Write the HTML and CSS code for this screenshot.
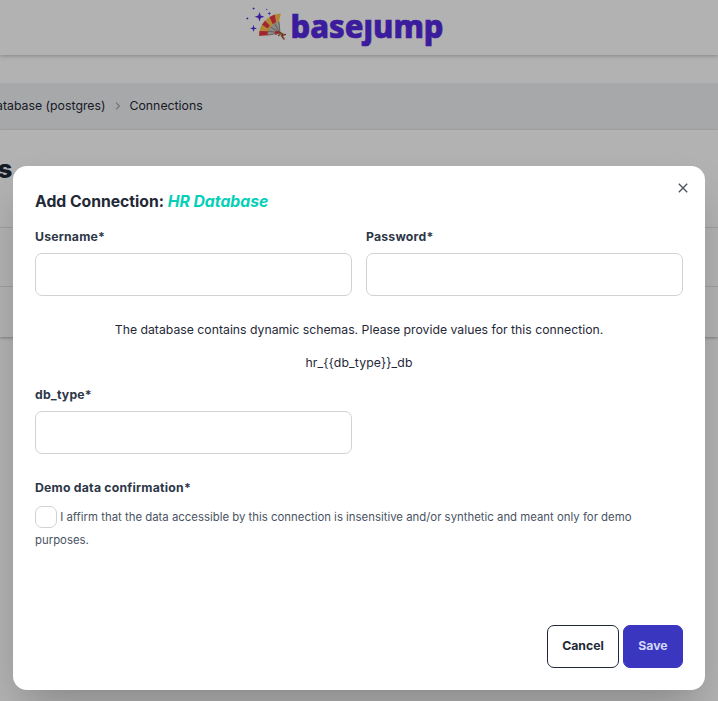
FILE: index.html
```html
<!DOCTYPE html>
<html lang="en">
<head>
<meta charset="utf-8">
<title>basejump</title>
<link rel="stylesheet" href="styles.css">
</head>
<body>
<header class="topbar">
  <svg class="logo" width="200" height="50" viewBox="0 0 200 50">
    <g fill="#5429e0">
      <path d="M16.500 12l1.200 3.500 3.600 1.200-3.600 1.200-1.200 3.500-1.200-3.500-3.600-1.200 3.600-1.200z"/>
      <path d="M10.500 24.700l.8 2.900 2.700.8-2.700.8-.8 2.900-.8-2.900-2.700-.8 2.700-.8z"/>
      <path d="M10.600 7l.4 1.100 1.100.4-1.100.4-.4 1.100-.4-1.100-1.100-.4 1.100-.4zM4.300 17l.4 1.100 1.100.4-1.100.4-.4 1.100-.4-1.100-1.100-.4 1.100-.4zM23.800 8.400l.3.8.8.3-.8.300-.3.800-.3-.8-.8-.3.800-.3zM26.300 11.600l.5 1.400 1.400.5-1.400.5-.5 1.400-.5-1.400-1.400-.5 1.400-.5z"/>
    </g>
    <path d="M37 33L23.500 35.200C24 28 29 22.500 36 21.200z" fill="#c9c4bd"/>
    <path d="M16 35.800C16 24 25 14.500 37.800 13.500L36 21.500C29.500 23.500 25.500 28 24.500 35.200z" fill="#ffc34d"/>
    <path d="M16 35.800l.6-4.800 8.400.3-.5 4zM19 24.800l3-4 4.800 4.800-2 3zM26.500 17l5.200-2.500 1.400 7.800-3.500 1.700z" fill="#e7374b"/>
    <path d="M36 21.500L37 33M31.500 23.500L37 33M27.500 27L37 33M25 31L37 33M24.500 35.200L37 33" fill="none" stroke="#6e6c70" stroke-width=".7"/>
    <path d="M31.500 32l2.500-1.500 1.500 3-3 1.500z" fill="#e7374b"/>
    <path d="M35 31.800l4.500 2-.8 2 2.300 3.200M38.500 35.500l3.800-1M37 34.500l-1.500 1" fill="none" stroke="#a5512d" stroke-width="1.500" stroke-linecap="round"/>
    <text class="wordmark" x="47.500" y="37.500" textLength="153" lengthAdjust="spacingAndGlyphs">baseȷump</text>
  </svg>
</header>
<nav class="crumbs">
  <span>Database (postgres)</span>
  <svg width="6" height="8" viewBox="0 0 6 8"><path d="M1 .8L4.500 4 1 7.200" fill="none" stroke="#a6abb2" stroke-width="1.200"/></svg>
  <span>Connections</span>
</nav>
<main class="content">
  <h1>Connections</h1>
  <div class="table"><div></div><div></div></div>
</main>
<div class="backdrop">
  <form class="modal">
    <button class="close" type="button" aria-label="Close"><svg width="10" height="10" viewBox="0 0 10 10"><path d="M.8 .8l8.400 8.400M9.200 .8L.8 9.200" fill="none" stroke="#4b5361" stroke-width="1.350"/></svg></button>
    <h2>Add Connection: <em>HR Database</em></h2>
    <div class="fields">
      <label>Username*<input type="text"></label>
      <label>Password*<input type="password"></label>
    </div>
    <p class="note">The database contains dynamic schemas. Please provide values for this connection.</p>
    <p class="schema">hr_{{db_type}}_db</p>
    <div class="fields">
      <label>db_type*<input type="text"></label>
    </div>
    <h3>Demo data confirmation*</h3>
    <div class="affirm"><input type="checkbox"> I affirm that the data accessible by this connection is insensitive and/or synthetic and meant only for demo purposes.</div>
    <div class="actions">
      <button class="btn" type="button">Cancel</button>
      <button class="btn primary" type="button">Save</button>
    </div>
  </form>
</div>
</body>
</html>
```
FILE: styles.css
```css
* { box-sizing: border-box; }
html { font-size: 14px; }
body {
  margin: 0;
  height: 701px;
  overflow: hidden;
  background: #fff;
  color: #1f2937;
  font-family: Inter, "Liberation Sans", sans-serif;
}
h1, h2, h3, p { margin: 0; }
.topbar {
  height: 55px;
  padding-left: 243px;
  box-shadow: 0 1px 4px rgba(0, 0, 0, .25);
}
.logo { display: block; overflow: visible; }
.wordmark {
  font: 800 32px "Noto Sans", "Open Sans", sans-serif;
  fill: #5429e0;
  stroke: #5429e0;
  stroke-width: .7px;
}
.crumbs {
  display: flex;
  align-items: center;
  gap: 9px;
  height: 47px;
  margin-top: 28px;
  padding-bottom: 2px;
  background: #eff1f4;
  font-size: 12.300px;
  white-space: nowrap;
}
.crumbs span:first-child {
  display: flex;
  justify-content: flex-end;
  width: 105.500px;
}
.content { height: 207px; padding-top: 22px; box-shadow: 0 1px 3px rgba(0, 0, 0, .3); }
.content h1 {
  width: 12.500px;
  height: 34px;
  display: flex;
  justify-content: flex-end;
  font-size: 26px;
  line-height: 34px;
  font-weight: 800;
}
.table { margin-top: 41px; }
.table div { height: 59px; border-top: 1px solid #e2e3e6; }
.backdrop {
  position: absolute;
  inset: 0;
  padding: 166px 13px 11px;
  background: rgba(0, 0, 0, .3);
}
.modal {
  position: relative;
  display: flex;
  flex-direction: column;
  height: 524px;
  padding: 22px;
  border-radius: 14px;
  background: #fff;
  box-shadow: 0 22px 44px -10px rgba(0, 0, 0, .25);
}
.close {
  position: absolute;
  top: 17px;
  right: 17px;
  display: flex;
  padding: 0;
  border: 0;
  background: none;
}
h2 { height: 27px; font-size: 15.750px; line-height: 27px; font-weight: 700; letter-spacing: -.02px; }
h2 em { color: #05d0b7; }
.fields { display: grid; grid-template-columns: 1fr 1fr; gap: 14px; margin-top: 12px; }
.fields label { font-size: 12.250px; line-height: 20px; font-weight: 700; letter-spacing: .2px; color: #2d3748; }
.fields input {
  display: block;
  width: 100%;
  height: 43px;
  margin-top: 6px;
  border: 1px solid #d2d2d4;
  border-radius: 7px;
  background: #fff;
}
.note, .schema { font-size: 12.250px; line-height: 20px; text-align: center; }
.note { margin-top: 24px; }
.schema { margin-top: 13px; letter-spacing: .12px; }
h3 { margin-top: 24px; font-size: 12.250px; line-height: 20px; font-weight: 700; letter-spacing: .22px; color: #2d3748; }
.affirm { margin-top: 8px; font-size: 11.380px; line-height: 23px; color: #4a5363; }
.affirm input {
  appearance: none;
  width: 22px;
  height: 22px;
  margin: -1px 0 1px;
  border: 1px solid #d2d2d4;
  border-radius: 7px;
  vertical-align: middle;
}
.actions { display: flex; justify-content: flex-end; gap: 4px; margin-top: auto; }
.btn {
  width: 72px;
  height: 43px;
  padding: 0 0 2px;
  border: 1px solid #1f2937;
  border-radius: 7px;
  background: #fff;
  color: #1f2937;
  font: 700 12.250px Inter, sans-serif;
}
.btn.primary { width: 60px; border-color: #3b36bf; background: #3b36bf; color: #d2d8fa; }
```
